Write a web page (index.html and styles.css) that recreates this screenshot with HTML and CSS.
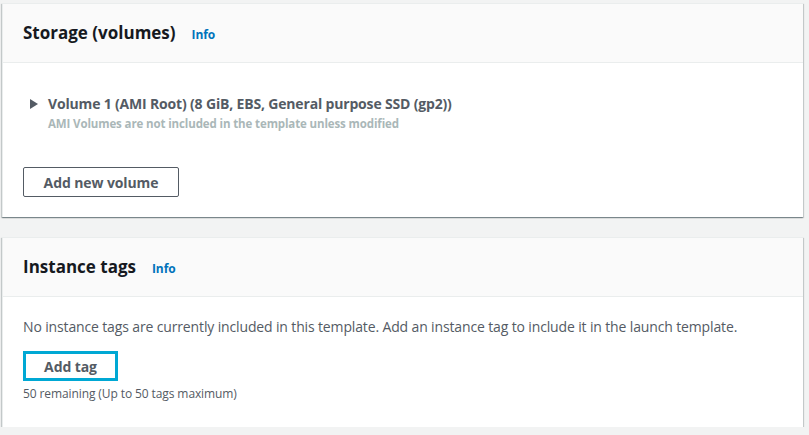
FILE: index.html
```html
<!DOCTYPE html>
<html>
<head>
<meta charset="utf-8">
<link rel="stylesheet" href="styles.css">
</head>
<body>
<div class="page">
  <section class="card">
    <div class="card-header">
      <h2 class="title">Storage (volumes)</h2>
      <a class="info">Info</a>
    </div>
    <div class="card-body storage-body">
      <div class="volume">
        <svg class="caret" width="8" height="10" viewBox="0 0 8 10"><path d="M0 0 L8 5 L0 10 Z" fill="#545b64"/></svg>
        <div class="volume-text">
          <div class="volume-title">Volume 1 (AMI Root) (8 GiB, EBS, General purpose SSD (gp2))</div>
          <div class="volume-sub">AMI Volumes are not included in the template unless modified</div>
        </div>
      </div>
      <button class="btn btn-wide">Add new volume</button>
    </div>
  </section>
  <section class="card">
    <div class="card-header">
      <h2 class="title">Instance tags</h2>
      <a class="info">Info</a>
    </div>
    <div class="card-body tags-body">
      <p class="desc">No instance tags are currently included in this template. Add an instance tag to include it in the launch template.</p>
      <button class="btn btn-focus">Add tag</button>
      <div class="remaining">50 remaining (Up to 50 tags maximum)</div>
    </div>
  </section>
</div>
</body>
</html>
```
FILE: styles.css
```css
html, body {
  margin: 0;
  padding: 0;
  background: #f2f3f3;
}
body {
  font-family: "Open Sans", "Noto Sans", sans-serif;
  color: #545b64;
}
.page {
  padding: 3px 6px 0 2px;
  display: flex;
  flex-direction: column;
  gap: 20px;
}
.card {
  background: #fff;
  border-top: 1px solid #eaeded;
  border-left: 1px solid #eaeded;
  box-shadow: 0 1px 1px 0 rgba(0, 28, 36, 0.3), 1px 1px 1px 0 rgba(0, 28, 36, 0.15), -1px 1px 1px 0 rgba(0, 28, 36, 0.15);
}
.card-header {
  background: #fafafa;
  border-bottom: 1px solid #eaeded;
  height: 58px;
  padding: 0 20px;
  display: flex;
  align-items: center;
  gap: 16px;
}
.title {
  margin: 0;
  font-size: 17px;
  font-weight: 700;
  color: #16191f;
  line-height: 22px;
}
.info {
  font-size: 12px;
  font-weight: 700;
  color: #0073bb;
  margin-top: 2px;
  letter-spacing: -0.1px;
}
.card-body {
  padding: 0 20px;
}
.storage-body {
  padding-top: 31px;
  padding-bottom: 20px;
}
.volume {
  display: flex;
  align-items: flex-start;
  gap: 10px;
  padding-left: 7px;
}
.caret {
  margin-top: 5px;
  flex: none;
}
.volume-title {
  font-size: 14px;
  font-weight: 700;
  line-height: 20px;
  color: #545b64;
  letter-spacing: -0.17px;
}
.volume-sub {
  font-size: 11.5px;
  font-weight: 700;
  line-height: 19px;
  color: #aab7b8;
  letter-spacing: -0.12px;
}
.btn {
  font-family: inherit;
  background: #fff;
  border: 1px solid #545b64;
  border-radius: 2px;
  color: #545b64;
  font-size: 14px;
  font-weight: 700;
  height: 30px;
  padding: 0;
  box-sizing: border-box;
  white-space: nowrap;
  display: block;
  letter-spacing: -0.1px;
}
.btn-wide {
  margin-top: 34px;
  width: 156px;
}
.tags-body {
  padding-top: 20px;
  padding-bottom: 25px;
}
.desc {
  margin: 0;
  font-size: 14px;
  line-height: 20px;
  letter-spacing: -0.14px;
}
.btn-focus {
  margin-top: 14px;
  width: 95px;
  border: 3px solid #00a8d4;
  border-radius: 0;
}
.remaining {
  margin-top: 5px;
  font-size: 12px;
  line-height: 16px;
  letter-spacing: -0.1px;
}
```
